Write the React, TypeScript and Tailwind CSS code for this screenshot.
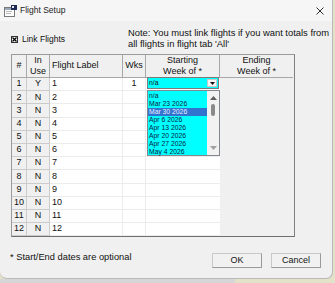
import React from 'react';

const weeks = ['n/a', 'Mar 23 2026', 'Mar 30 2026', 'Apr 6 2026', 'Apr 13 2026', 'Apr 20 2026', 'Apr 27 2026', 'May 4 2026'];
const rows = Array.from({ length: 12 }, (_, i) => i + 1);

const TitleIcon = () => (
  <svg width="13" height="12" viewBox="0 0 13 12">
    <rect x="0.5" y="2.5" width="10" height="9" fill="#fff" stroke="#7a7a7a" />
    <rect x="1" y="3" width="9" height="2" fill="#9aa7b8" />
    <rect x="2" y="6" width="6" height="1" fill="#b8b8b8" />
    <rect x="2" y="8" width="5" height="1" fill="#b8b8b8" />
    <rect x="7" y="0" width="6" height="5" fill="#1d2a55" />
    <rect x="8" y="1" width="2" height="2" fill="#e8e8e8" />
  </svg>
);

const App: React.FC = () => {
  return (
    <div className="w-[335px] h-[283px] overflow-hidden bg-[#e3e2c8] flex flex-col font-['Liberation_Sans',Arial,sans-serif] text-[#111]">
      <div className="w-[333px] h-[279px] shrink-0 bg-[#f0f0f0] rounded-b-[7px] border-b border-r border-[#b9b9b9] flex flex-col">
        {/* Title bar */}
        <div className="h-[21px] shrink-0 bg-[#f6f6f6] flex items-center">
          <div className="ml-[4px] mt-[1px] flex"><TitleIcon /></div>
          <span className="ml-[3px] text-[8.5px] text-[#222]">Flight Setup</span>
          <svg className="ml-auto mr-[8px]" width="8" height="8" viewBox="0 0 8 8">
            <path d="M0.5 0.5 L7.5 7.5 M7.5 0.5 L0.5 7.5" stroke="#333" strokeWidth="1" />
          </svg>
        </div>

        {/* Body */}
        <div className="flex-1 pl-[11px] flex flex-col">
          <div className="h-[33px] flex items-start">
            <div className="mt-[13px] flex items-center">
              <div className="w-[7px] h-[7px] border border-[#333] bg-white flex items-center justify-center">
                <svg width="5" height="5" viewBox="0 0 5 5">
                  <path d="M0.5 0.5 L4.5 4.5 M4.5 0.5 L0.5 4.5" stroke="#000" strokeWidth="1.3" />
                </svg>
              </div>
              <span className="ml-[4px] text-[8.5px] leading-[10px]">Link Flights</span>
            </div>
            <div className="ml-[63px] mt-[6px] text-[9.4px] leading-[11px] whitespace-nowrap">
              <div>Note: You must link flights if you want totals from</div>
              <div>all flights in flight tab 'All'</div>
            </div>
          </div>

          {/* Grid */}
          <div className="relative w-[284px] border border-[#9a9a9a] border-r-[#7f7f7f] border-b-[#6f6f6f] text-[9px]">
            <div className="grid grid-cols-[15px_23px_73px_23px_74px_73px]">
              <div className="h-[23px] border-r border-b border-[#a8a8a8] flex items-center justify-center">#</div>
              <div className="h-[23px] border-r border-b border-[#a8a8a8] flex flex-col items-center justify-center leading-[11px]">
                <span>In</span><span>Use</span>
              </div>
              <div className="h-[23px] border-r border-b border-[#a8a8a8] flex items-center pl-[2px]">Flight Label</div>
              <div className="h-[23px] border-r border-b border-[#a8a8a8] flex items-center justify-center">Wks</div>
              <div className="h-[23px] border-r border-b border-[#a8a8a8] flex flex-col items-center justify-center leading-[11px]">
                <span>Starting</span><span>Week of *</span>
              </div>
              <div className="h-[23px] border-b border-[#a8a8a8] flex flex-col items-center justify-center leading-[11px]">
                <span>Ending</span><span>Week of *</span>
              </div>

              {rows.map((r) => (
                <React.Fragment key={r}>
                  <div className="h-[13.2px] border-r border-b border-[#cbcbcb] flex items-center justify-center">{r}</div>
                  <div className="h-[13.2px] border-r border-b border-[#cbcbcb] flex items-center justify-center">{r === 1 ? 'Y' : 'N'}</div>
                  <div className="h-[13.2px] bg-white border-r border-b border-[#ececec] flex items-center pl-[2px]">{r}</div>
                  <div className="h-[13.2px] bg-white border-r border-b border-[#ececec] flex items-center justify-center">{r === 1 ? '1' : ''}</div>
                  <div className="h-[13.2px] bg-white border-b border-[#ececec]" />
                  <div className="h-[13.2px]" />
                </React.Fragment>
              ))}
            </div>

            {/* Combo box in row 1 */}
            <div className="absolute left-[135px] top-[22px] w-[72px] h-[12px] border border-[#7a7a7a] bg-[#00ffff] flex items-center">
              <span className="pl-[1px] text-[6.8px] leading-[8px]">n/a</span>
              <div className="ml-auto mr-[1px] w-[10px] h-[8px] bg-[#f4f4f4] border border-[#c8c8c8] flex items-center justify-center">
                <svg width="5" height="3" viewBox="0 0 5 3"><path d="M0 0 H5 L2.5 3 Z" fill="#111" /></svg>
              </div>
            </div>

            {/* Open list */}
            <div className="absolute left-[135px] top-[35px] w-[73px] h-[66px] border border-[#828790] bg-[#00ffff] flex">
              <div className="flex-1 pt-[1px] flex flex-col">
                {weeks.map((w, i) => (
                  <div
                    key={w}
                    className={
                      i === 2
                        ? 'h-[8px] leading-[8px] text-[6.8px] pl-[1px] bg-[#3373d0] text-[#e8f0ff]'
                        : 'h-[8px] leading-[8px] text-[6.8px] pl-[1px] text-[#0b2244]'
                    }
                  >
                    {w}
                  </div>
                ))}
              </div>
              <div className="w-[12px] bg-[#f2f2f2] flex flex-col items-center">
                <svg className="mt-[5px]" width="7" height="4" viewBox="0 0 7 4"><path d="M0 4 L3.5 0 L7 4 Z" fill="#606060" /></svg>
                <div className="mt-[4px] w-[4px] h-[12px] rounded-[2px] bg-[#8a8a8a]" />
                <svg className="mt-auto mb-[5px]" width="7" height="4" viewBox="0 0 7 4"><path d="M0 0 H7 L3.5 4 Z" fill="#a0a0a0" /></svg>
              </div>
            </div>
          </div>

          {/* Footer */}
          <div className="flex items-start pr-[11px]">
            <span className="mt-[14px] -ml-[1px] text-[9.3px]">* Start/End dates are optional</span>
            <button className="ml-auto mt-[16px] w-[50px] h-[15px] bg-[#f1f1f1] border border-[#c8c8c8] border-r-[#9a9a9a] border-b-[#9a9a9a] text-[9px] flex items-center justify-center">OK</button>
            <button className="ml-[9px] mt-[16px] w-[50px] h-[15px] bg-[#f1f1f1] border border-[#c8c8c8] border-r-[#9a9a9a] border-b-[#9a9a9a] text-[9px] flex items-center justify-center">Cancel</button>
          </div>
        </div>
      </div>
      <div className="flex-1 flex">
        <div className="w-[235px] bg-[#d6d6d6]" />
      </div>
    </div>
  );
};

export default App;
